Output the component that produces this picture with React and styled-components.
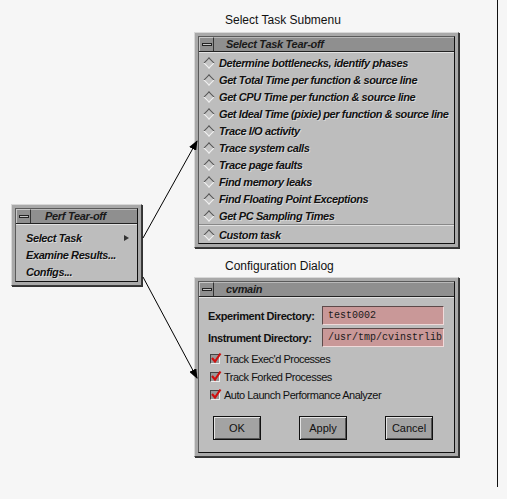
import React from 'react';
import styled, { createGlobalStyle } from 'styled-components';

const GlobalStyle = createGlobalStyle`
  html, body {
    margin: 0;
    padding: 0;
    background: #f6f6f6;
  }
  body {
    font-family: "Liberation Sans", Arial, sans-serif;
  }
`;

const Stage = styled.div`
  position: relative;
  width: 497px;
  height: 487px;
  border-right: 1px solid #111;
  display: flex;
  align-items: flex-start;
`;

const LeftCol = styled.div`
  margin: 204px 0 0 11px;
`;

const RightCol = styled.div`
  margin: 12px 0 0 52px;
  display: flex;
  flex-direction: column;
`;

const Caption = styled.div`
  font-size: 12px;
  line-height: 16px;
  color: #111;
  padding-left: 31px;
  margin-top: ${p => p.$top || 0}px;
  margin-bottom: ${p => p.$bottom || 4}px;
`;

const Window = styled.div`
  width: ${p => p.$width}px;
  box-sizing: border-box;
  background: #a9a9a9;
  border: 1px solid #3a3a3a;
  border-top-color: #d8d8d8;
  border-left-color: #d8d8d8;
  padding: 3px;
  box-shadow: 1px 1px 0 #333;
`;

const WindowInner = styled.div`
  border: 1px solid #111;
  border-top-color: #5a5a5a;
  border-left-color: #5a5a5a;
  background: #bdbdbd;
`;

const TitleBar = styled.div`
  display: flex;
  align-items: stretch;
  height: 14px;
  background: #8f8f8f;
  border-bottom: 1px solid #222;
`;

const MenuButton = styled.div`
  width: 15px;
  box-sizing: border-box;
  border-right: 1px solid #333;
  border-left: 1px solid #c8c8c8;
  border-top: 1px solid #c8c8c8;
  display: flex;
  align-items: center;
  justify-content: center;
  &::after {
    content: '';
    width: 10px;
    height: 3px;
    background: #c6c6c6;
    border: 1px solid #222;
    box-sizing: border-box;
  }
`;

const Title = styled.div`
  flex: 1;
  border-top: 1px solid #b8b8b8;
  font-size: 11px;
  line-height: 13px;
  font-weight: bold;
  font-style: italic;
  color: #1a1a1a;
  padding-left: ${p => p.$indent || 12}px;
  letter-spacing: -0.3px;
`;

const MenuList = styled.div`
  padding: ${p => p.$pad || '1px 0 0'};
  border-top: 1px solid #e2e2e2;
`;

const MenuItem = styled.div`
  display: flex;
  align-items: center;
  height: ${p => p.$h || 17}px;
  padding-left: ${p => p.$indent || 4}px;
  padding-right: 8px;
  font-size: 11px;
  font-weight: bold;
  font-style: italic;
  color: #111;
  letter-spacing: -0.4px;
  white-space: nowrap;
  text-shadow: 1px 1px 0 #d9d9d9;
`;

const Diamond = styled.span`
  width: 6px;
  height: 6px;
  margin: 0 6px 0 2px;
  transform: rotate(45deg);
  border: 1px solid #555;
  border-right-color: #f2f2f2;
  border-bottom-color: #f2f2f2;
  background: #c4c4c4;
  flex: none;
`;

const Cascade = styled.span`
  margin-left: auto;
  width: 0;
  height: 0;
  border-top: 3px solid transparent;
  border-bottom: 3px solid transparent;
  border-left: 5px solid #333;
`;

const Separator = styled.div`
  height: 0;
  border-top: 1px solid #888;
  border-bottom: 1px solid #e0e0e0;
`;

const DialogBody = styled.div`
  padding: 8px 10px 12px 9px;
  border-top: 1px solid #e2e2e2;
`;

const Fields = styled.div`
  display: flex;
  flex-direction: column;
  gap: 3px;
  margin-bottom: 3px;
`;

const FieldRow = styled.div`
  display: flex;
  align-items: center;
  justify-content: space-between;
`;

const FieldLabel = styled.label`
  font-size: 11px;
  font-weight: bold;
  color: #111;
  letter-spacing: -0.4px;
`;

const Field = styled.div`
  width: 122px;
  height: 19px;
  box-sizing: border-box;
  background: #c99898;
  border: 1px solid #5d4a4a;
  border-right-color: #f0dada;
  border-bottom-color: #f0dada;
  font-family: "Liberation Mono", "DejaVu Sans Mono", monospace;
  font-size: 10px;
  line-height: 17px;
  padding-left: 5px;
  color: #1a1a1a;
  white-space: nowrap;
  overflow: hidden;
`;

const CheckRow = styled.div`
  display: flex;
  align-items: center;
  height: 18px;
  padding-left: 2px;
  font-size: 11px;
  color: #111;
  letter-spacing: -0.5px;
`;

const CheckBox = styled.span`
  position: relative;
  width: 10px;
  height: 10px;
  box-sizing: border-box;
  background: #999;
  border: 1px solid #444;
  border-right-color: #eee;
  border-bottom-color: #eee;
  margin-right: 4px;
  flex: none;
  svg {
    position: absolute;
    left: -1px;
    top: -3px;
  }
`;

const ButtonRow = styled.div`
  display: flex;
  justify-content: space-between;
  margin-top: 12px;
  padding: 0 11px 0 5px;
`;

const Button = styled.div`
  width: 48px;
  height: 24px;
  box-sizing: border-box;
  border: 1px solid #111;
  background: #a3a3a3;
  box-shadow: inset 1px 1px 0 #e4e4e4, inset -1px -1px 0 #555;
  display: flex;
  align-items: center;
  justify-content: center;
  font-size: 11px;
  color: #111;
`;

const Arrows = styled.svg`
  position: absolute;
  left: 0;
  top: 0;
  pointer-events: none;
`;

const tasks = [
  'Determine bottlenecks, identify phases',
  'Get Total Time per function & source line',
  'Get CPU Time per function & source line',
  'Get Ideal Time (pixie) per function & source line',
  'Trace I/O activity',
  'Trace system calls',
  'Trace page faults',
  'Find memory leaks',
  'Find Floating Point Exceptions',
  'Get PC Sampling Times',
];

const checks = [
  "Track Exec'd Processes",
  'Track Forked Processes',
  'Auto Launch Performance Analyzer',
];

function Check() {
  return (
    <CheckBox>
      <svg width="12" height="12" viewBox="0 0 12 12">
        <path d="M2 6 L5 9.5 L10.5 1.5" fill="none" stroke="#d01010" strokeWidth="2.2" />
      </svg>
    </CheckBox>
  );
}

function WindowTitle({ children, indent }) {
  return (
    <TitleBar>
      <MenuButton />
      <Title $indent={indent}>{children}</Title>
    </TitleBar>
  );
}

export default function App() {
  return (
    <>
      <GlobalStyle />
      <Stage>
        <LeftCol>
          <Window $width={131}>
            <WindowInner>
              <WindowTitle indent={14}>Perf Tear-off</WindowTitle>
              <MenuList $pad="4px 0 1px">
                <MenuItem $indent={10}>
                  Select Task
                  <Cascade />
                </MenuItem>
                <MenuItem $indent={10}>Examine Results...</MenuItem>
                <MenuItem $indent={10}>Configs...</MenuItem>
              </MenuList>
            </WindowInner>
          </Window>
        </LeftCol>

        <RightCol>
          <Caption>Select Task Submenu</Caption>
          <Window $width={265}>
            <WindowInner>
              <WindowTitle>Select Task Tear-off</WindowTitle>
              <MenuList>
                {tasks.map(t => (
                  <MenuItem key={t}>
                    <Diamond />
                    {t}
                  </MenuItem>
                ))}
                <Separator />
                <MenuItem>
                  <Diamond />
                  Custom task
                </MenuItem>
              </MenuList>
            </WindowInner>
          </Window>

          <Caption $top={10} $bottom={3}>Configuration Dialog</Caption>
          <Window $width={265}>
            <WindowInner>
              <WindowTitle>cvmain</WindowTitle>
              <DialogBody>
                <Fields>
                  <FieldRow>
                    <FieldLabel>Experiment Directory:</FieldLabel>
                    <Field>test0002</Field>
                  </FieldRow>
                  <FieldRow>
                    <FieldLabel>Instrument Directory:</FieldLabel>
                    <Field>/usr/tmp/cvinstrlib</Field>
                  </FieldRow>
                </Fields>
                {checks.map(c => (
                  <CheckRow key={c}>
                    <Check />
                    {c}
                  </CheckRow>
                ))}
                <ButtonRow>
                  <Button>OK</Button>
                  <Button>Apply</Button>
                  <Button>Cancel</Button>
                </ButtonRow>
              </DialogBody>
            </WindowInner>
          </Window>
        </RightCol>

        <Arrows width="497" height="487">
          <defs>
            <marker id="head" markerWidth="10" markerHeight="8" refX="9" refY="4" orient="auto" markerUnits="userSpaceOnUse">
              <path d="M0 0 L10 4 L0 8 Z" fill="#000" />
            </marker>
          </defs>
          <line x1="143" y1="238" x2="197" y2="141" stroke="#000" strokeWidth="1" markerEnd="url(#head)" />
          <line x1="143" y1="277" x2="197" y2="378" stroke="#000" strokeWidth="1" markerEnd="url(#head)" />
        </Arrows>
      </Stage>
    </>
  );
}
